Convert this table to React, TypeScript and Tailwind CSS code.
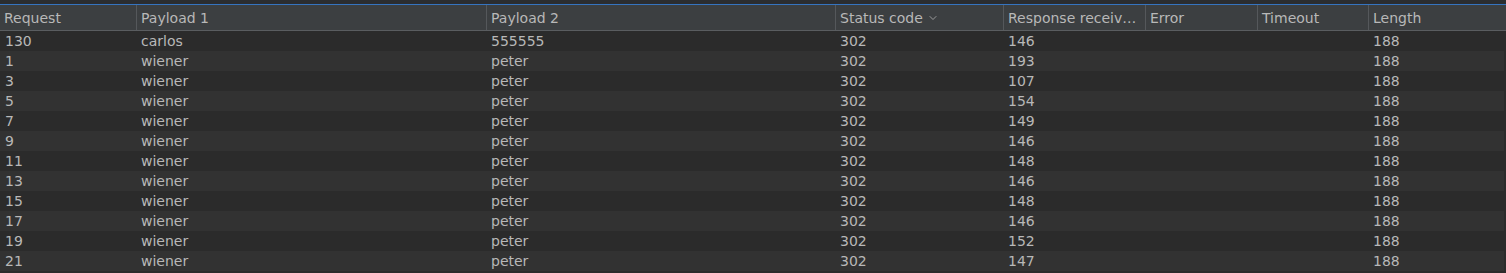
import { ChevronDown } from "lucide-react";

type Row = {
  request: string;
  payload1: string;
  payload2: string;
  status: string;
  received: string;
  error: string;
  timeout: string;
  length: string;
};

const columns = [
  { title: "Request", width: "w-[137px]" },
  { title: "Payload 1", width: "w-[350px]" },
  { title: "Payload 2", width: "w-[349px]" },
  { title: "Status code", width: "w-[168px]", sorted: true },
  { title: "Response receiv…", width: "w-[142px]" },
  { title: "Error", width: "w-[112px]" },
  { title: "Timeout", width: "w-[111px]" },
  { title: "Length", width: "flex-1", last: true },
];

const received = ["146", "193", "107", "154", "149", "146", "148", "146", "148", "146", "152", "147"];
const requests = ["130", "1", "3", "5", "7", "9", "11", "13", "15", "17", "19", "21"];

const rows: Row[] = requests.map((r, i) => ({
  request: r,
  payload1: i === 0 ? "carlos" : "wiener",
  payload2: i === 0 ? "555555" : "peter",
  status: "302",
  received: received[i],
  error: "",
  timeout: "",
  length: "188",
}));

export default function App() {
  return (
    <div
      className="w-[1506px] h-[273px] bg-[#2b2b2b] text-[14px] text-[#b8b8b8] overflow-hidden leading-none"
      style={{ fontFamily: '"DejaVu Sans", sans-serif' }}
    >
      <div className="h-[4px] bg-[#2b2d30]" />
      <div className="h-[1px] bg-[#3574c0]" />
      <div className="flex h-[26px] bg-[#3c3f41] border-b border-[#5a5d60] pr-[2px]">
        {columns.map((col) => (
          <div
            key={col.title}
            className={`${col.width} flex items-center gap-[4px] pl-[4px] whitespace-nowrap overflow-hidden ${
              col.last ? "" : "border-r border-[#55585b]"
            }`}
          >
            <span>{col.title}</span>
            {col.sorted && <ChevronDown className="w-3 h-3 text-[#b8b8b8]" strokeWidth={1.5} />}
          </div>
        ))}
      </div>
      <div className="pr-[2px]">
        {rows.map((row, i) => (
          <div
            key={row.request}
            className={`flex h-[20px] items-center ${i % 2 === 0 ? "bg-[#2b2b2b]" : "bg-[#323232]"}`}
          >
            <div className="w-[137px] pl-[5px]">{row.request}</div>
            <div className="w-[350px] pl-[4px]">{row.payload1}</div>
            <div className="w-[349px] pl-[4px]">{row.payload2}</div>
            <div className="w-[168px] pl-[4px]">{row.status}</div>
            <div className="w-[142px] pl-[4px]">{row.received}</div>
            <div className="w-[112px] pl-[4px]">{row.error}</div>
            <div className="w-[111px] pl-[4px]">{row.timeout}</div>
            <div className="flex-1 pl-[4px]">{row.length}</div>
          </div>
        ))}
      </div>
    </div>
  );
}
